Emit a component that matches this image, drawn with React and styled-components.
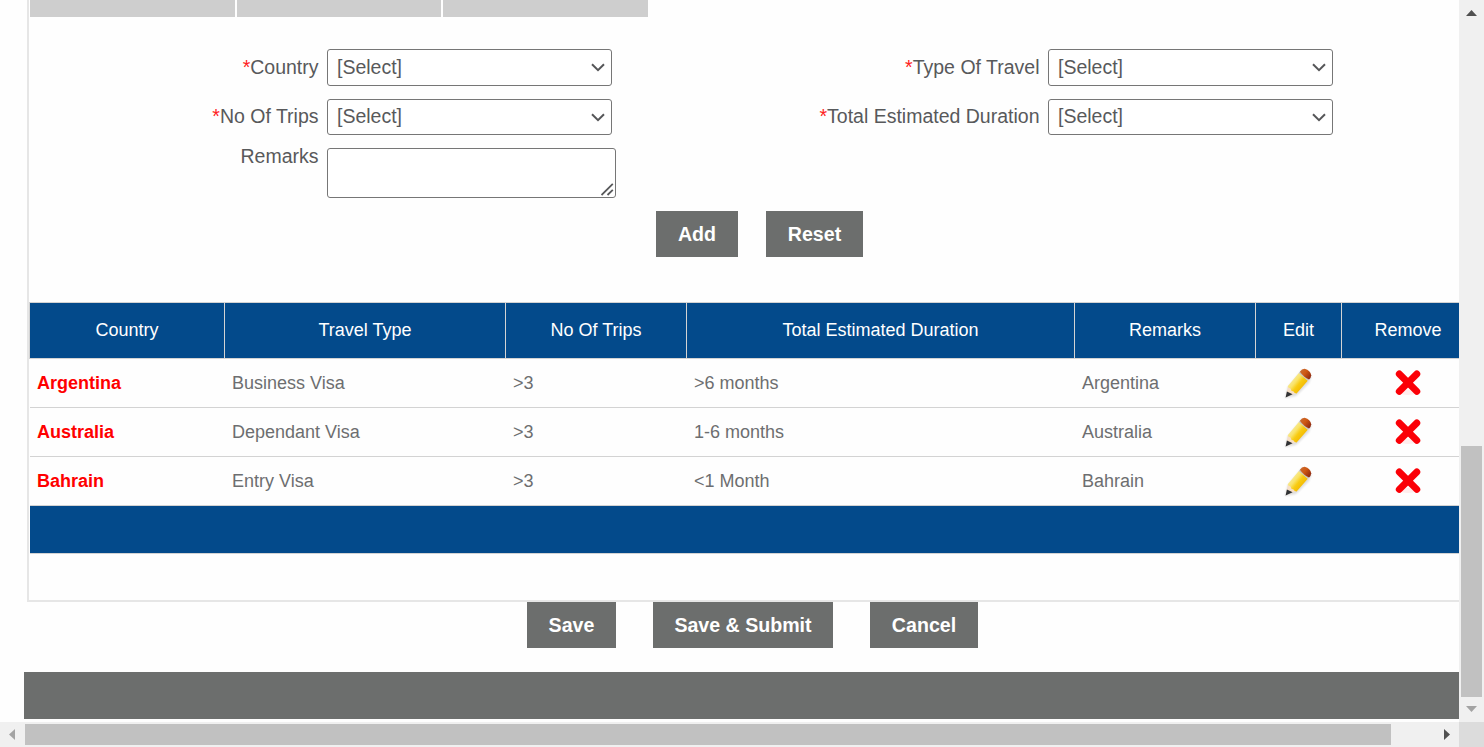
import React from "react";
import styled, { createGlobalStyle } from "styled-components";

const GlobalStyle = createGlobalStyle`
  * { box-sizing: border-box; }
  body {
    margin: 0;
    background: #fff;
    font-family: "Liberation Sans", Arial, sans-serif;
    overflow: hidden;
  }
`;

const Window = styled.div`
  display: grid;
  grid-template: 722px 25px / 1459px 25px;
  width: 1484px;
  height: 747px;
  overflow: hidden;
`;

const Page = styled.main`
  overflow: hidden;
  background: #fefefe;
`;

const Panel = styled.section`
  height: 602px;
  margin-left: 27px;
  border-left: 2px solid #e6e6e6;
  border-bottom: 2px solid #e6e6e6;
  overflow: hidden;
`;

const Tabs = styled.div`
  display: flex;
  gap: 2px;
  height: 17px;
  padding-left: 1px;
`;

const Tab = styled.div`
  width: ${(p) => p.$width}px;
  background: #cecece;
`;

const Form = styled.form`
  display: grid;
  grid-template-columns: 298px 285px 436px 285px;
  grid-template-rows: 37px 36px 50px;
  row-gap: 13px;
  padding-top: 32px;
`;

const Label = styled.label`
  padding: ${(p) => p.$offset}px 8.5px 0 0;
  margin-top: ${(p) => (p.$top ? -3 : 0)}px;
  height: 29px;
  color: #58595b;
  font-size: 19.5px;
  line-height: 22px;
  text-align: right;
  white-space: nowrap;
`;

const Star = styled.span`
  color: #ff2020;
`;

const SelectBox = styled.div`
  display: flex;
  justify-content: space-between;
  padding: ${(p) => p.$offset - 1}px 6px 0 9px;
  border: 1px solid #767676;
  border-radius: 3px;
  background: #fff;
  color: #58595b;
  font-size: 19.5px;
  line-height: 22px;
`;

const Chevron = styled.svg`
  width: 14px;
  height: 9px;
  margin-top: ${(p) => 14 - p.$offset}px;
`;

const RemarksBox = styled.div`
  display: flex;
  justify-content: flex-end;
  align-items: flex-end;
  width: 289px;
  padding: 1px;
  border: 1px solid #767676;
  border-radius: 3px;
  background: #fff;
`;

const Button = styled.button`
  width: ${(p) => p.$width}px;
  height: 46px;
  padding: 0;
  border: 0;
  background: #6c6e6d;
  color: #fff;
  font: bold 19.6px/22px "Liberation Sans", Arial, sans-serif;
  white-space: nowrap;
`;

const FormActions = styled.div`
  display: flex;
  gap: 28px;
  padding: 13px 0 0 627px;
`;

const PageActions = styled.div`
  display: flex;
  gap: 37px;
  height: 70px;
  padding-left: 527px;
`;

const Table = styled.div`
  width: 1446px;
  margin-top: 45px;
  color: #6d6e70;
  font-size: 18px;
  line-height: 20px;
`;

const Row = styled.div`
  display: grid;
  grid-template-columns: 195px 281px 181px 388px 181px 86px 133px;
  height: 49px;
  margin-left: 1px;
  border-bottom: 1px solid #d3d3d3;
`;

const HeaderRow = styled(Row)`
  height: 57px;
  margin-left: 0;
  border: 1px solid #d3d3d3;
  background: #034a8b;
  color: #fff;
`;

const HeaderCell = styled.div`
  display: flex;
  align-items: center;
  justify-content: center;
  padding-bottom: 1px;
  border-right: 1px solid #d3d3d3;
  white-space: nowrap;
`;

const Cell = styled.div`
  padding: 14px 0 0 7px;
  white-space: nowrap;
`;

const CountryCell = styled(Cell)`
  color: #f00;
  font-weight: bold;
`;

const IconCell = styled.div`
  display: flex;
  align-items: center;
  justify-content: center;
  padding-right: 2px;
`;

const TableFooter = styled.div`
  height: 48px;
  margin-left: 1px;
  border-bottom: 1px solid #d3d3d3;
  background: #034a8b;
`;

const PageFooter = styled.footer`
  height: 47px;
  margin-left: 24px;
  background: #6c6e6d;
`;

const VerticalBar = styled.div`
  display: flex;
  flex-direction: column;
  align-items: center;
  background: #f0f0f0;
  padding: 10px 0 10px;
`;

const VerticalThumb = styled.div`
  width: 21px;
  height: 251px;
  margin: 430px 2px 9px;
  background: #c1c1c1;
`;

const HorizontalBar = styled.div`
  display: flex;
  align-items: center;
  padding-left: 9px;
  background: #f0f0f0;
`;

const HorizontalThumb = styled.div`
  width: 1366px;
  height: 21px;
  margin: 0 53px 0 10px;
  background: #c1c1c1;
`;

const Corner = styled.div`
  background: #dcdcdc;
`;

const Arrow = styled.svg`
  display: block;
  flex: none;
`;

const COLUMNS = ["Country", "Travel Type", "No Of Trips", "Total Estimated Duration", "Remarks", "Edit", "Remove"];

const TRIPS = [
  { country: "Argentina", type: "Business Visa", trips: ">3", duration: ">6 months" },
  { country: "Australia", type: "Dependant Visa", trips: ">3", duration: "1-6 months" },
  { country: "Bahrain", type: "Entry Visa", trips: ">3", duration: "<1 Month" },
];

function Select({ offset }) {
  return (
    <SelectBox $offset={offset}>
      [Select]
      <Chevron viewBox="0 0 14 9" $offset={offset}>
        <path d="M1 1.3 L7 7.2 L13 1.3" fill="none" stroke="#555658" strokeWidth="2" />
      </Chevron>
    </SelectBox>
  );
}

function Field({ label, offset }) {
  return (
    <>
      <Label $offset={offset}><Star>*</Star>{label}</Label>
      <Select offset={offset} />
    </>
  );
}

function PencilIcon({ id }) {
  return (
    <svg width="32" height="32" viewBox="0 0 32 32">
      <defs>
        <linearGradient id={`body${id}`} x1="8" y1="13" x2="20" y2="23" gradientUnits="userSpaceOnUse">
          <stop offset="0" stopColor="#f8eca0" />
          <stop offset=".35" stopColor="#f9e368" />
          <stop offset=".6" stopColor="#f8cb12" />
          <stop offset="1" stopColor="#f3b800" />
        </linearGradient>
        <linearGradient id={`rubber${id}`} x1="19" y1="4" x2="28" y2="11" gradientUnits="userSpaceOnUse">
          <stop offset="0" stopColor="#c9682c" />
          <stop offset=".4" stopColor="#cf5813" />
          <stop offset="1" stopColor="#8f2a10" />
        </linearGradient>
        <filter id={`soft${id}`} x="-20%" y="-20%" width="140%" height="140%">
          <feGaussianBlur stdDeviation=".9" />
        </filter>
      </defs>
      <path d="M3 31 L6 20 L20 3 L29.5 9 L27 16 L14 29 Z" fill="#000" opacity=".13" filter={`url(#soft${id})`} />
      <path d="M6 18.8 L14.2 26 L3.8 30.2 Z" fill="#f6dfc8" />
      <path d="M4.9 24.4 L10.6 27.2 L3.6 30.5 Z" fill="#303235" />
      <path d="M5.7 19.2 L16.8 5.9 L25.8 13.8 L14.6 26.4 Q12.2 26.6 11.3 24.3 Q8.8 24.1 8.5 21.4 Q6.2 21.3 5.7 19.2 Z" fill={`url(#body${id})`} />
      <path d="M16.8 5.9 L18.1 4.5 L27 12.4 L25.8 13.8 Z" fill="#c9c5b9" />
      <path d="M17.9 4.7 Q19.7 1.6 22.7 1.7 Q28.4 3.4 29.2 8.2 Q29 11 27.1 12.6 Q22 10.4 17.9 4.7 Z" fill={`url(#rubber${id})`} />
    </svg>
  );
}

function RemoveIcon() {
  return (
    <svg width="32" height="32" viewBox="0 0 32 32">
      <ellipse cx="16" cy="25.5" rx="8" ry="2.5" fill="#ffeded" />
      <path d="M7.3 7 L24.8 24.4 M24.8 7 L7.3 24.4" stroke="#fb0007" strokeWidth="6.9" strokeLinecap="round" />
    </svg>
  );
}

export default function App() {
  return (
    <>
      <GlobalStyle />
      <Window>
        <Page>
          <Panel>
            <Tabs>
              <Tab $width={205} />
              <Tab $width={204} />
              <Tab $width={205} />
            </Tabs>
            <Form>
              <Field label="Country" offset={7} />
              <Field label="Type Of Travel" offset={7} />
              <Field label="No Of Trips" offset={6} />
              <Field label="Total Estimated Duration" offset={6} />
              <Label $top $offset={0}>Remarks</Label>
              <RemarksBox>
                <svg width="13" height="13" viewBox="0 0 13 13">
                  <path d="M.5 12 L11.8 .8 M6.5 12 L11.8 6.8" stroke="#58595b" strokeWidth="1.8" />
                </svg>
              </RemarksBox>
            </Form>
            <FormActions>
              <Button $width={82}>Add</Button>
              <Button $width={97}>Reset</Button>
            </FormActions>
            <Table>
              <HeaderRow>
                {COLUMNS.map((name) => <HeaderCell key={name}>{name}</HeaderCell>)}
              </HeaderRow>
              {TRIPS.map((trip) => (
                <Row key={trip.country}>
                  <CountryCell>{trip.country}</CountryCell>
                  <Cell>{trip.type}</Cell>
                  <Cell>{trip.trips}</Cell>
                  <Cell>{trip.duration}</Cell>
                  <Cell>{trip.country}</Cell>
                  <IconCell><PencilIcon id={trip.country} /></IconCell>
                  <IconCell><RemoveIcon /></IconCell>
                </Row>
              ))}
              <TableFooter />
            </Table>
          </Panel>
          <PageActions>
            <Button $width={89}>Save</Button>
            <Button $width={180}>Save &amp; Submit</Button>
            <Button $width={108}>Cancel</Button>
          </PageActions>
          <PageFooter />
        </Page>
        <VerticalBar>
          <Arrow width="11" height="6" viewBox="0 0 11 6"><path d="M0 6 L5.5 0 L11 6 Z" fill="#505050" /></Arrow>
          <VerticalThumb />
          <Arrow width="11" height="6" viewBox="0 0 11 6"><path d="M0 0 L11 0 L5.5 6 Z" fill="#a3a3a3" /></Arrow>
        </VerticalBar>
        <HorizontalBar>
          <Arrow width="6" height="11" viewBox="0 0 6 11"><path d="M6 0 L0 5.5 L6 11 Z" fill="#a3a3a3" /></Arrow>
          <HorizontalThumb />
          <Arrow width="6" height="11" viewBox="0 0 6 11"><path d="M0 0 L6 5.5 L0 11 Z" fill="#505050" /></Arrow>
        </HorizontalBar>
        <Corner />
      </Window>
    </>
  );
}
